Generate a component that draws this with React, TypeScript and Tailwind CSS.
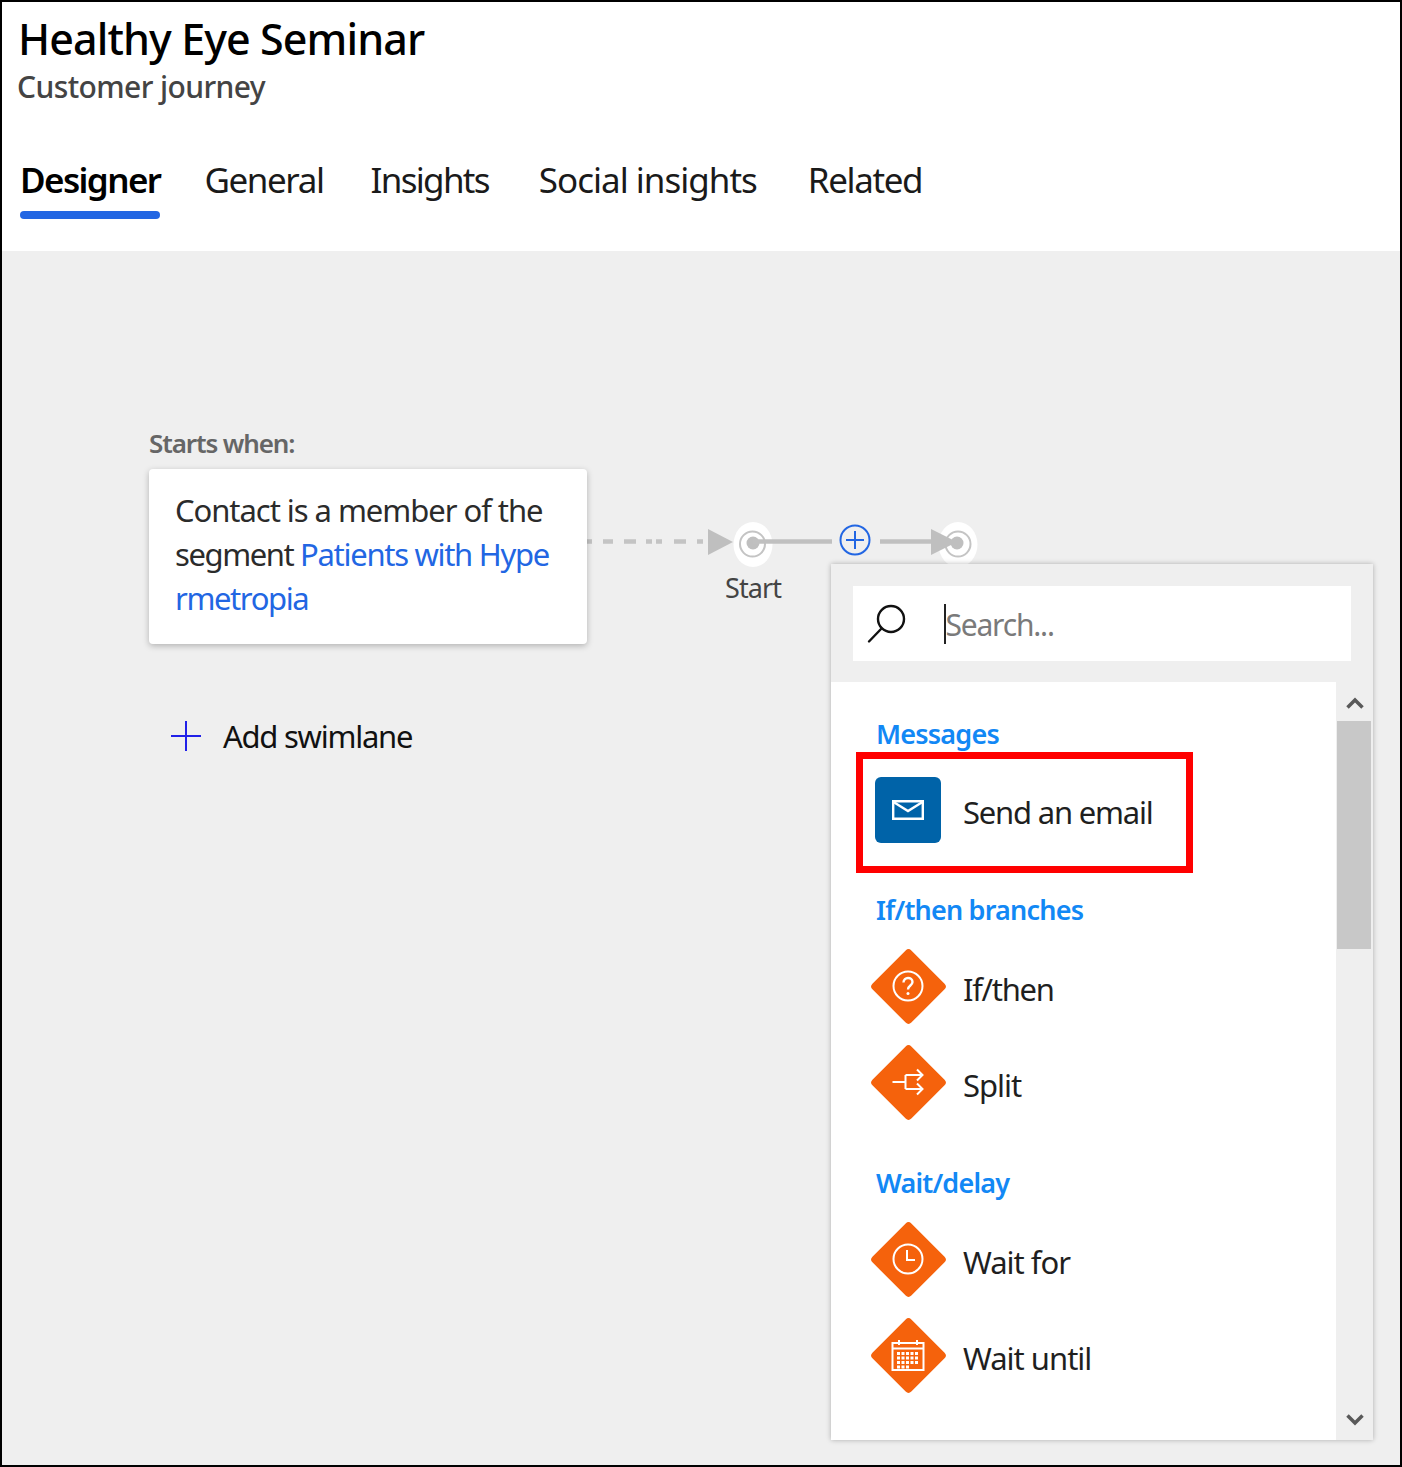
import type { ReactNode } from 'react'

const FONT = 'font-["Noto_Sans",sans-serif]'

function Heading({ children, className = '' }: { children: ReactNode; className?: string }) {
  return (
    <div className={`ml-[45px] h-[36px] text-[27px] leading-[36px] font-semibold tracking-[-0.8px] text-[#1288f5] ${className}`}>
      {children}
    </div>
  )
}

function Diamond({ children }: { children: ReactNode }) {
  return (
    <div className="relative flex h-[76px] w-[76px] items-center justify-center">
      <div className="absolute h-[55px] w-[55px] rotate-45 rounded-[4px] bg-[#f5620c]" />
      <svg viewBox="0 0 36 36" className="relative h-[36px] w-[36px]" fill="none" stroke="#ffffff" strokeWidth="2">
        {children}
      </svg>
    </div>
  )
}

function ActionRow({ label, tracking = 'tracking-[-1px]', children }: { label: string; tracking?: string; children: ReactNode }) {
  return (
    <div className="flex h-[96px] items-center pl-[39px]">
      <Diamond>{children}</Diamond>
      <span className={`ml-[17px] mt-[6px] text-[31px] text-[#1f1f1f] ${tracking}`}>{label}</span>
    </div>
  )
}

function Connector() {
  return (
    <svg className="absolute left-0 top-0 h-[340px] w-[1000px]" viewBox="0 0 1000 340" fill="none">
      {/* coordinates relative to the canvas (page x - 2, page y - 251) */}
      <path d="M585 290.500h5M601 290.500h10M622 290.500h12M644 290.500h6M654 290.500h6M672 290.500h12M695 290.500h6" stroke="#c4c4c4" strokeWidth="4.500" />
      <path d="M706 278l25 13-25 13z" fill="#bfbfbf" />
      <ellipse cx="751" cy="293.500" rx="19.500" ry="22.500" fill="#ffffff" />
      <circle cx="750.500" cy="293" r="12.500" stroke="#c4c4c4" strokeWidth="2" />
      <circle cx="751" cy="292" r="6.500" fill="#bfbfbf" />
      <path d="M751 290.500H830" stroke="#c0c0c0" strokeWidth="4.500" />
      <circle cx="853" cy="289" r="14.500" stroke="#2266e3" strokeWidth="2" />
      <path d="M853 280v18M844 289h18" stroke="#2266e3" strokeWidth="2" />
      <path d="M878 290.500H935" stroke="#c0c0c0" strokeWidth="4.500" />
      <ellipse cx="956" cy="293.500" rx="19.500" ry="22.500" fill="#ffffff" />
      <circle cx="956" cy="293" r="12.500" stroke="#c4c4c4" strokeWidth="2" />
      <circle cx="955" cy="292" r="6.500" fill="#bfbfbf" />
      <path d="M929 278l26 13-26 13z" fill="#bfbfbf" />
    </svg>
  )
}

function ActionPanel() {
  return (
    <div className="absolute left-[829px] top-[313px] flex h-[876px] w-[542px] flex-col bg-[#efefef] shadow-[0_0_5px_rgba(0,0,0,0.28)]">
      <div className="ml-[22px] mt-[22px] flex h-[75px] w-[498px] items-center bg-white">
        <svg viewBox="0 0 40 40" className="ml-[14px] h-[40px] w-[40px]" fill="none" stroke="#111111" strokeWidth="2.400">
          <circle cx="24" cy="15" r="13" />
          <path d="M14.500 24.500L2 37.500" strokeLinecap="round" />
        </svg>
        <div className="ml-[37px] h-[40px] w-[1.5px] bg-[#222222]" />
        <span className="mt-[3px] text-[30px] leading-none tracking-[-1.2px] text-[#7a7a7a]">Search...</span>
      </div>
      <div className="mt-[21px] flex min-h-0 flex-1">
        <div className="w-[505px] bg-white pt-[34px]">
          <Heading>Messages</Heading>
          <div className="ml-[25px] flex h-[121px] w-[337px] items-start border-[7px] border-[#ff0000] pl-[12px] pt-[18px]">
            <div className="flex h-[66px] w-[66px] items-center justify-center rounded-[6px] bg-[#0063a8]">
              <svg viewBox="0 0 32 20" className="h-[20px] w-[32px]" fill="none" stroke="#ffffff" strokeWidth="2.400">
                <path d="M1.200 1.200h29.600v17.600H1.200z" />
                <path d="M1.500 2l14.500 9L30.500 2" />
              </svg>
            </div>
            <span className="ml-[22px] mt-[12px] text-[31px] leading-[46px] tracking-[-1.2px] text-[#1f1f1f]">Send an email</span>
          </div>
          <Heading className="mt-[19px] mb-[10px]">If/then branches</Heading>
          <ActionRow label="If/then" tracking="tracking-[-1.3px]">
            <circle cx="18" cy="18" r="14.500" />
            <path d="M13.500 14.500c0-6 9-6 9-.5 0 3.500-4.500 3.500-4.500 7.500" strokeWidth="2.400" />
            <circle cx="18" cy="25.500" r="1.500" fill="#ffffff" stroke="none" />
          </ActionRow>
          <ActionRow label="Split">
            <path d="M2.500 18h13M15.500 11v14M15.500 11h17M15.500 25h17M27 5.500l5.500 5.500-5.500 5.500M27 19.500l5.500 5.500-5.500 5.500" />
          </ActionRow>
          <Heading className="mt-[35px] mb-[10px] tracking-[-0.6px]">Wait/delay</Heading>
          <ActionRow label="Wait for">
            <circle cx="18" cy="18" r="14.500" />
            <path d="M17 9v10h8" />
          </ActionRow>
          <ActionRow label="Wait until">
            <path d="M2.500 6h31v27h-31zM2.500 11.500h31M9 3v5M27 3v5" />
            <path d="M7 16.500h22M7 21h22M7 25.500h22M7 30h13" strokeWidth="3" strokeDasharray="3 1.500" />
          </ActionRow>
        </div>
        <div className="relative w-[35px]">
          <svg viewBox="0 0 18 12" className="absolute left-[10px] top-[15px] h-[12px] w-[18px]" fill="none" stroke="#595959" strokeWidth="3.500">
            <path d="M1.500 10.500L9 3l7.500 7.500" />
          </svg>
          <div className="absolute left-[1px] top-[39px] h-[228px] w-[34px] bg-[#c8c8c8]" />
          <svg viewBox="0 0 18 12" className="absolute left-[10px] top-[732px] h-[12px] w-[18px]" fill="none" stroke="#595959" strokeWidth="3.500">
            <path d="M1.500 1.500L9 9l7.500-7.500" />
          </svg>
        </div>
      </div>
    </div>
  )
}

export default function App() {
  return (
    <div className={`flex h-[1467px] w-[1402px] flex-col border-2 border-black bg-white ${FONT}`}>
      <header className="h-[249px] shrink-0 pl-[16px]">
        <h1 className="mt-[9px] text-[43px] leading-[56px] font-medium tracking-[-0.9px] text-black">Healthy Eye Seminar</h1>
        <p className="-ml-[1px] text-[30px] leading-[40px] font-medium tracking-[-0.6px] text-[#444444]">Customer journey</p>
        <nav className="ml-[2px] mt-[49px] flex text-[35px] leading-[48px] tracking-[-1.4px] text-[#1a1a1a]">
          <div className="flex flex-col">
            <span className="font-semibold tracking-[-1.6px] text-black">Designer</span>
            <div className="mt-[7px] h-[8px] rounded-full bg-[#2266e3]" />
          </div>
          <span className="ml-[44px]">General</span>
          <span className="ml-[47px] tracking-[-1.7px]">Insights</span>
          <span className="ml-[50px] tracking-[-1px]">Social insights</span>
          <span className="ml-[51px]">Related</span>
        </nav>
      </header>
      <main className="relative min-h-0 flex-1 bg-[#efefef] pl-[147px] pt-[174px]">
        <Connector />
        <div className="relative w-[438px]">
          <div className="h-[36px] text-[26px] leading-[36px] font-semibold tracking-[-1.1px] text-[#666666]">Starts when:</div>
          <div className="mt-[8px] h-[175px] rounded-[4px] bg-white pl-[26px] pt-[19px] text-[31px] leading-[44px] tracking-[-1.05px] text-[#2b2b2b] shadow-[0_2px_6px_rgba(0,0,0,0.25)]">
            <div>Contact is a member of the</div>
            <div className="tracking-[-1.4px]">
              segment <span className="tracking-[-1.3px] text-[#2266e3]">Patients with Hype</span>
            </div>
            <div className="tracking-[-1.4px] text-[#2266e3]">rmetropia</div>
          </div>
        </div>
        <div className="mt-[69px] flex items-center pl-[22px]">
          <svg viewBox="0 0 30 30" className="h-[30px] w-[30px]" stroke="#2020e8" strokeWidth="2">
            <path d="M15 0v30M0 15h30" />
          </svg>
          <span className="ml-[22px] text-[31px] tracking-[-1.25px] text-[#111111]">Add swimlane</span>
        </div>
        <div className="absolute left-[723px] top-[319px] text-[27px] leading-[36px] tracking-[-0.9px] text-[#444444]">Start</div>
        <ActionPanel />
      </main>
    </div>
  )
}
